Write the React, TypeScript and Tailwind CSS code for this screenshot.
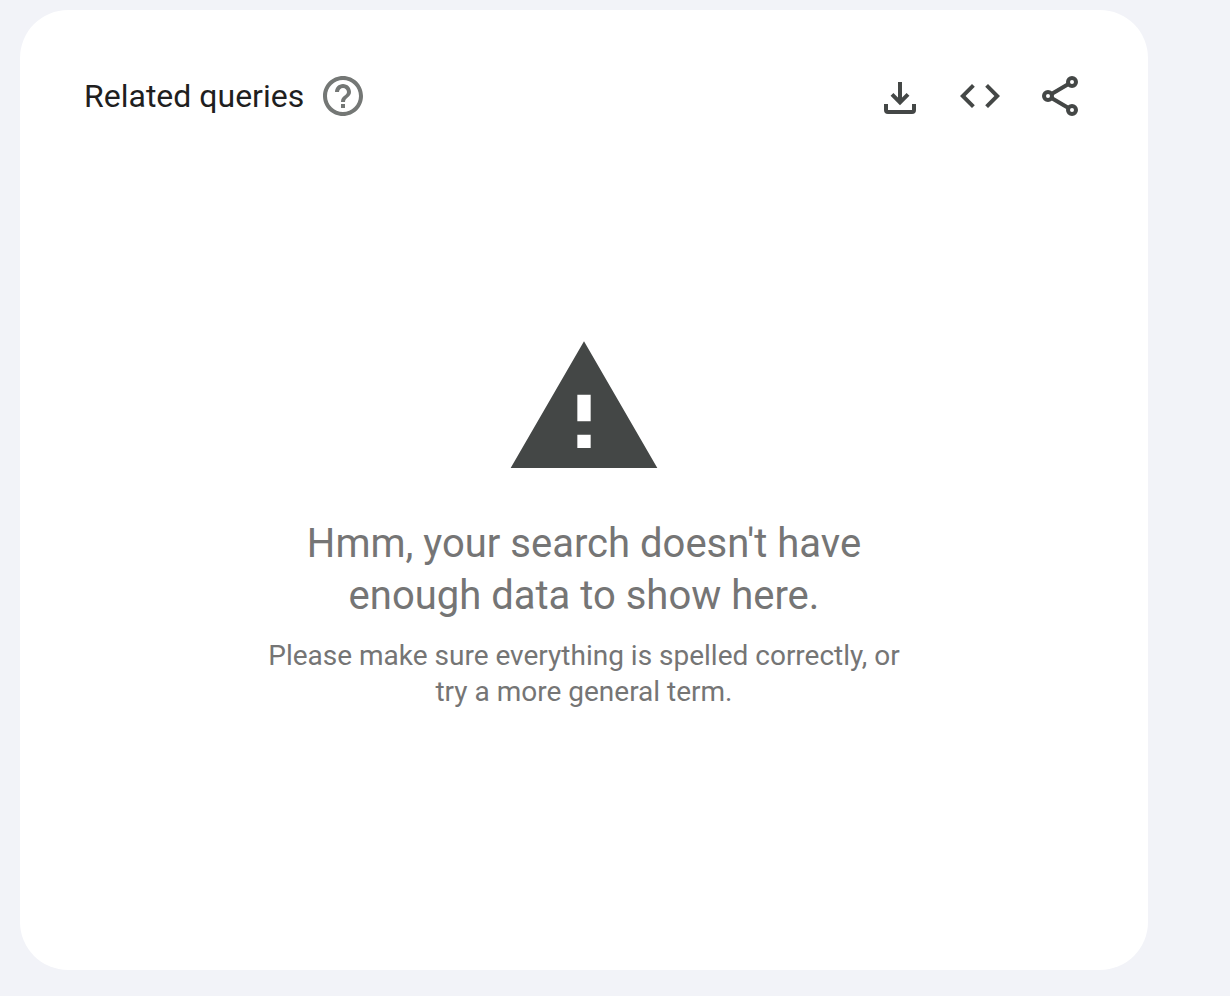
import { ReactNode } from 'react';

function IconButton({ label, children }: { label: string; children: ReactNode }) {
  return (
    <button type="button" aria-label={label} className="size-12 cursor-pointer rounded-full text-[#444746]">
      <svg viewBox="0 0 48 48" className="size-12" fill="none" aria-hidden="true">
        {children}
      </svg>
    </button>
  );
}

export default function App() {
  return (
    <main className="flex min-h-screen bg-[#f2f3f8] pt-[10px] pr-[82px] pb-[26px] pl-5 font-['Roboto',sans-serif]">
      <section className="flex flex-1 flex-col rounded-[48px] bg-white px-16 pt-[62px] pb-[52px]">
        <header className="flex items-center justify-between">
          <div className="flex items-center gap-[15px]">
            <h2 className="text-[32px] leading-12 text-[#1f1f1f]">Related queries</h2>
            <button type="button" aria-label="Help" className="size-12 cursor-pointer rounded-full text-[#747775]">
              <svg viewBox="0 0 24 24" className="size-12" fill="currentColor" aria-hidden="true">
                <path d="M11 18h2v-2h-2v2zm1-16C6.48 2 2 6.48 2 12s4.48 10 10 10 10-4.48 10-10S17.52 2 12 2zm0 18c-4.41 0-8-3.59-8-8s3.59-8 8-8 8 3.59 8 8-3.59 8-8 8zm0-14c-2.21 0-4 1.79-4 4h2c0-1.1.9-2 2-2s2 .9 2 2c0 2-3 1.75-3 5h2c0-2.25 3-2.5 3-5 0-2.21-1.79-4-4-4z" />
              </svg>
            </button>
          </div>
          <div className="flex items-center gap-8">
            <IconButton label="Download">
              <g stroke="currentColor" strokeWidth="4">
                <path d="M24 10v20" />
                <path d="M16 22.4l8 8 8-8" />
                <path d="M10 32v6a2 2 0 0 0 2 2h24a2 2 0 0 0 2-2v-6" />
              </g>
            </IconButton>
            <IconButton label="Embed">
              <path
                fill="currentColor"
                d="M18.8 33.2L9.6 24l9.2-9.2L16 12 4 24l12 12 2.8-2.8zm10.4 0l9.2-9.2-9.2-9.2L32 12l12 12-12 12-2.8-2.8z"
              />
            </IconButton>
            <IconButton label="Share">
              <g stroke="currentColor" strokeWidth="4">
                <path d="M32.5 12l-17 10M15.5 26l17 10" />
                <circle cx="36" cy="10" r="4" />
                <circle cx="12" cy="24" r="4" />
                <circle cx="36" cy="38" r="4" />
              </g>
            </IconButton>
          </div>
        </header>

        <div className="flex flex-1 flex-col items-center justify-center text-center text-[#757575]">
          <svg viewBox="0 0 24 24" className="size-40 text-[#444746]" fill="currentColor" aria-hidden="true">
            <path d="M1 21h22L12 2 1 21zm12-3h-2v-2h2v2zm0-4h-2v-4h2v4z" />
          </svg>
          <p className="mt-[30px] text-[40px] leading-[52px]">
            Hmm, your search doesn't have
            <br />
            enough data to show here.
          </p>
          <p className="mt-4 text-[28px] leading-9">
            Please make sure everything is spelled correctly, or
            <br />
            try a more general term.
          </p>
        </div>
      </section>
    </main>
  );
}
